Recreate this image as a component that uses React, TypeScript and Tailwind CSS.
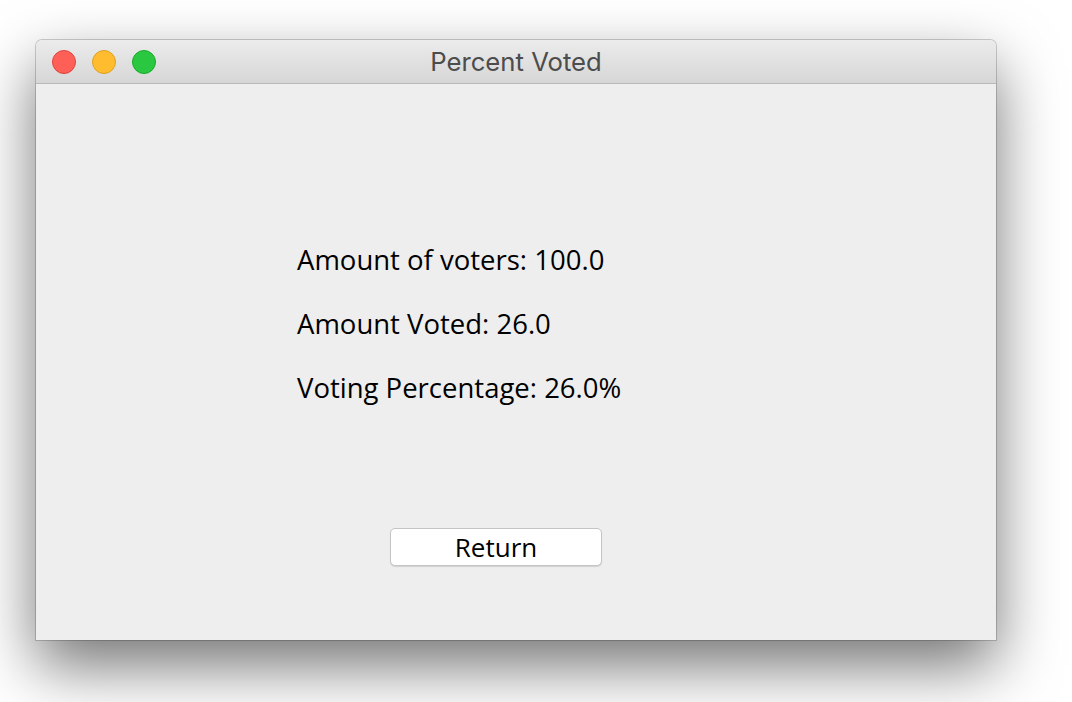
import { JSX } from "react";

const Light = (props: { bg: string, border: string }): JSX.Element => {
    return (
        <div className={`w-[24px] h-[24px] rounded-full border ${props.bg} ${props.border}`} />
    )
}

export default function App(): JSX.Element {
    return (
        <div className="w-[1072px] h-[702px] bg-white overflow-hidden pt-[40px] pl-[36px]">
            <div className="w-[960px] h-[600px] rounded-t-[6px] bg-[#eeeeee] flex flex-col shadow-[0_26px_62px_rgba(0,0,0,0.55),0_0_0_1px_rgba(0,0,0,0.18)]">
                {/* title bar */}
                <div className="h-[44px] rounded-t-[6px] bg-gradient-to-b from-[#ececec] to-[#d6d6d6] border-b border-[#b8b8b8] flex items-center px-[16px] relative">
                    <div className="flex gap-[16px]">
                        <Light bg="bg-[#fe5f57]" border="border-[#e0443e]" />
                        <Light bg="bg-[#febc2e]" border="border-[#dea123]" />
                        <Light bg="bg-[#29c840]" border="border-[#1aab29]" />
                    </div>
                    <div className="absolute inset-0 flex items-center justify-center text-[25.7px] text-[#4c4c4c] font-['Inter',sans-serif] pt-[1px]">
                        Percent Voted
                    </div>
                </div>

                {/* content */}
                <div className="flex-1 flex flex-col items-start pl-[261px] pt-[157px] font-['Open_Sans',sans-serif] text-[27.5px] text-black">
                    <div className="flex flex-col gap-[26px] leading-[38px]">
                        <div>Amount of voters: 100.0</div>
                        <div>Amount Voted: 26.0</div>
                        <div>Voting Percentage: 26.0%</div>
                    </div>
                    <button className="mt-[121px] ml-[93px] w-[212px] h-[38px] bg-white border border-[#c4c4c4] rounded-[5px] shadow-[0_1px_1px_rgba(0,0,0,0.12)] text-[26px] leading-none flex items-center justify-center">
                        Return
                    </button>
                </div>
            </div>
        </div>
    )
}
